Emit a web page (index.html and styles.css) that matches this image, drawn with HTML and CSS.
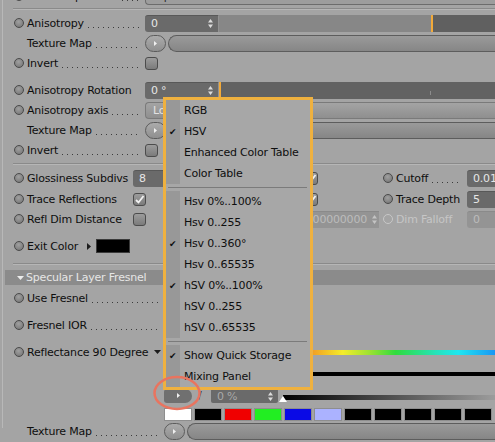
FILE: index.html
```html
<!DOCTYPE html>
<html lang="en">
<head>
  <meta charset="UTF-8" />
  <title>Reflection Attributes</title>
  <link rel="stylesheet" href="styles.css">
</head>
<body>
  <div class="panel">
    <div class="row cut">
      <div class="head"><span class="dot"></span><span class="name">Use Interpolation</span><span class="lead"></span></div>
      <div class="drop light">Equal</div>
    </div>
    <div class="sep"></div>

    <div class="row mt3">
      <div class="head"><span class="dot"></span><span class="name">Anisotropy</span><span class="lead"></span></div>
      <div class="field num">0<svg class="spin" width="5" height="9" viewBox="0 0 5 9"><path d="M2.5 0 5 3.5H0zM2.5 9 5 5.5H0z"/></svg></div>
      <div class="track"><div class="track-lo"></div></div>
    </div>
    <div class="row">
      <div class="head"><span class="dot none"></span><span class="name">Texture Map</span><span class="lead"></span></div>
      <div class="pill"><svg width="3" height="5" viewBox="0 0 3 5"><path d="M0 0 3 2.5 0 5z"/></svg></div>
      <div class="bar"></div>
    </div>
    <div class="row">
      <div class="head"><span class="dot"></span><span class="name">Invert</span><span class="lead"></span></div>
      <div class="chk"></div>
    </div>

    <div class="row mt7">
      <div class="head"><span class="dot"></span><span class="name">Anisotropy Rotation</span></div>
      <div class="field num">0 °<svg class="spin" width="5" height="9" viewBox="0 0 5 9"><path d="M2.5 0 5 3.5H0zM2.5 9 5 5.5H0z"/></svg></div>
      <div class="track dark"><div class="track-lo zero"></div><div class="tick"></div></div>
    </div>
    <div class="row">
      <div class="head"><span class="dot"></span><span class="name">Anisotropy axis</span><span class="lead"></span></div>
      <div class="drop">Local Z</div>
    </div>
    <div class="row">
      <div class="head"><span class="dot none"></span><span class="name">Texture Map</span><span class="lead"></span></div>
      <div class="pill"><svg width="3" height="5" viewBox="0 0 3 5"><path d="M0 0 3 2.5 0 5z"/></svg></div>
      <div class="bar"></div>
    </div>
    <div class="row">
      <div class="head"><span class="dot"></span><span class="name">Invert</span><span class="lead"></span></div>
      <div class="chk"></div>
    </div>
    <div class="sep mt3"></div>

    <div class="row2 mt3">
      <div class="head"><span class="dot"></span><span class="name">Glossiness Subdivs</span></div>
      <div class="mid">
        <div class="field gloss">8</div>
        <div class="chk on push"><svg width="11" height="11" viewBox="0 0 11 11"><path d="M2 6 4.5 8.5 9.5 2"/></svg></div>
      </div>
      <div class="head r"><span class="dot"></span><span class="name">Cutoff</span><span class="lead"></span></div>
      <div class="field side">0.01</div>
    </div>
    <div class="row2 mt1">
      <div class="head"><span class="dot"></span><span class="name">Trace Reflections</span></div>
      <div class="mid">
        <div class="chk on"><svg width="11" height="11" viewBox="0 0 11 11"><path d="M2 6 4.5 8.5 9.5 2"/></svg></div>
        <div class="chk on push"><svg width="11" height="11" viewBox="0 0 11 11"><path d="M2 6 4.5 8.5 9.5 2"/></svg></div>
      </div>
      <div class="head r"><span class="dot"></span><span class="name">Trace Depth</span></div>
      <div class="field side">5</div>
    </div>
    <div class="row2">
      <div class="head"><span class="dot"></span><span class="name">Refl Dim Distance</span></div>
      <div class="mid">
        <div class="chk"></div>
        <div class="field off long">100000000<svg class="spin" width="5" height="9" viewBox="0 0 5 9"><path d="M2.5 0 5 3.5H0zM2.5 9 5 5.5H0z"/></svg></div>
      </div>
      <div class="head r off"><span class="dot"></span><span class="name">Dim Falloff</span></div>
      <div class="field side off">0</div>
    </div>

    <div class="row mt7">
      <div class="head auto"><span class="dot"></span><span class="name">Exit Color</span></div>
      <svg class="tri-r" width="4" height="7" viewBox="0 0 4 7"><path d="M0 0 4 3.5 0 7z"/></svg>
      <div class="color-box"></div>
    </div>
    <div class="sep mt7"></div>

    <div class="group-head">
      <svg width="7" height="4" viewBox="0 0 7 4"><path d="M0 0H7L3.5 4z"/></svg>
      <span>Specular Layer Fresnel</span>
    </div>

    <div class="row mt3">
      <div class="head w164"><span class="dot"></span><span class="name">Use Fresnel</span><span class="lead"></span></div>
    </div>
    <div class="row mt7">
      <div class="head w164"><span class="dot"></span><span class="name">Fresnel IOR</span><span class="lead"></span></div>
    </div>
    <div class="row mt7">
      <div class="head w164"><span class="dot"></span><span class="name">Reflectance 90 Degree</span><span class="grow"></span><svg class="tri-d" width="7" height="4" viewBox="0 0 7 4"><path d="M0 0H7L3.5 4z"/></svg></div>
      <div class="spectrum"></div>
    </div>

    <div class="knots"></div>
    <div class="grad-row">
      <div class="gbtn"><svg width="3" height="5" viewBox="0 0 3 5"><path d="M0 0 3 2.5 0 5z"/></svg></div>
      <span class="slash">/</span>
      <div class="field pct">0 %<svg class="spin" width="5" height="9" viewBox="0 0 5 9"><path d="M2.5 0 5 3.5H0zM2.5 9 5 5.5H0z"/></svg></div>
      <div class="gbar"></div>
    </div>
    <div class="swatches">
      <div class="sw white"></div>
      <div class="sw"></div>
      <div class="sw red"></div>
      <div class="sw green"></div>
      <div class="sw blue"></div>
      <div class="sw lilac"></div>
      <div class="sw"></div>
      <div class="sw"></div>
      <div class="sw"></div>
      <div class="sw"></div>
      <div class="sw"></div>
    </div>
    <div class="row">
      <div class="head w164"><span class="dot none"></span><span class="name">Texture Map</span><span class="lead"></span></div>
      <div class="pill"><svg width="3" height="5" viewBox="0 0 3 5"><path d="M0 0 3 2.5 0 5z"/></svg></div>
      <div class="bar"></div>
    </div>
  </div>

  <div class="menu">
    <div class="mgroup">
      <div class="mi">RGB</div>
      <div class="mi on">HSV</div>
      <div class="mi">Enhanced Color Table</div>
      <div class="mi">Color Table</div>
    </div>
    <div class="msep"></div>
    <div class="mgroup">
      <div class="mi">Hsv 0%..100%</div>
      <div class="mi">Hsv 0..255</div>
      <div class="mi on">Hsv 0..360°</div>
      <div class="mi">Hsv 0..65535</div>
      <div class="mi on">hSV 0%..100%</div>
      <div class="mi">hSV 0..255</div>
      <div class="mi">hSV 0..65535</div>
    </div>
    <div class="msep"></div>
    <div class="mgroup">
      <div class="mi on">Show Quick Storage</div>
      <div class="mi">Mixing Panel</div>
    </div>
  </div>

  <svg class="mark" width="50" height="36" viewBox="0 0 50 36"><ellipse cx="25" cy="18" rx="22.5" ry="16"/></svg>
</body>
</html>
```

FILE: styles.css
```css
* {
  box-sizing: border-box;
}

body {
  margin: 0;
  width: 495px;
  height: 442px;
  overflow: hidden;
  position: relative;
  background: #a4a4a4;
  font-family: 'DejaVu Sans', sans-serif;
  font-size: 11px;
  letter-spacing: -0.2px;
  color: #0e0e0e;
}

.panel {
  width: 495px;
  height: 442px;
  box-shadow: inset 2px 0 0 #a4a4a4, inset 3px 0 0 #b8b8b8;
}

.mt1 { margin-top: 1px; }
.mt3 { margin-top: 3px; }
.mt7 { margin-top: 7px; }

.row {
  display: flex;
  align-items: center;
  height: 20px;
}

.row.cut {
  margin-top: -14px;
}

.row2 {
  display: grid;
  grid-template-columns: 133px 250px 84px 28px;
  align-items: center;
  height: 20px;
}

.head {
  width: 145px;
  flex: none;
  display: flex;
  align-items: center;
  height: 20px;
  padding: 0 4px 0 14px;
}

.row2 .head { width: auto; }
.head.w164 { width: 164px; padding-right: 3px; }
.head.auto { width: auto; padding-right: 0; }
.head.r { padding: 0 5px 0 0; }

.dot {
  flex: none;
  width: 10px;
  height: 10px;
  margin-right: 3px;
  border-radius: 50%;
  border: 1px solid #4a4a4a;
  background: radial-gradient(circle at 45% 35%, #a0a0a0, #717171);
}

.dot.none { visibility: hidden; }

.name { white-space: nowrap; }

.lead {
  flex: 1;
  height: 1px;
  margin: 8px 0 0 4px;
  background-image: linear-gradient(to right, #3c3c3c 1px, transparent 1px);
  background-size: 5px 1px;
}

.grow { flex: 1; }

.tri-d path { fill: #1c1c1c; }

.off .name { color: #c6c6c6; }
.off .dot {
  border-color: #c8c8c8;
  background: none;
}

/* inputs */
.field {
  height: 17px;
  display: flex;
  align-items: center;
  justify-content: space-between;
  padding: 0 5px 0 6px;
  background: #6a6a6a;
  border-top: 1px solid #585858;
  color: #e6e6e6;
  border-radius: 3px 0 0 3px;
  white-space: nowrap;
}

.field.num {
  width: 74px;
  border-right: 1px solid #929292;
}

.spin path { fill: #dcdcdc; }

.field.gloss { width: 72px; }
.field.side { width: 40px; }
.field.off {
  background: #949494;
  border-top-color: #8a8a8a;
  color: #bcbcbc;
}
.field.off .spin path { fill: #c4c4c4; }
.field.long {
  width: 150px;
  margin: 0 4px 0 auto;
  justify-content: flex-end;
  gap: 5px;
  padding-right: 2px;
}

.track {
  flex: 1;
  height: 17px;
  display: flex;
  background: #606060;
}

.track-lo {
  width: 214px;
  height: 100%;
  background: #878787;
  border-right: 2px solid #f2aa3a;
}

.track.dark { background: #626262; }
.track-lo.zero {
  width: 2px;
  background: none;
}

.tick {
  width: 1px;
  height: 4px;
  margin: 9px 0 0 209px;
  background: #8c8c8c;
}

.pill {
  flex: none;
  width: 21px;
  height: 17px;
  display: flex;
  align-items: center;
  justify-content: center;
  border: 1px solid #5c5c5c;
  border-radius: 9px;
  background: linear-gradient(#ababab, #8f8f8f);
}

.pill path, .gbtn path { fill: #f0f0f0; }

.bar {
  flex: 1;
  height: 17px;
  margin-left: 2px;
  border: 1px solid #5d5d5d;
  border-right: none;
  border-radius: 9px 0 0 9px;
  background: linear-gradient(#9a9a9a, #868686);
}

.drop {
  flex: 1;
  height: 17px;
  display: flex;
  align-items: center;
  padding-left: 7px;
  border: 1px solid #7a7a7a;
  border-right: none;
  border-radius: 4px 0 0 4px;
  background: linear-gradient(#a4a4a4, #8f8f8f);
  color: #e2e2e2;
}

.drop.light {
  background: #9d9d9d;
  border-color: #6c6c6c;
  color: #2a2a2a;
}

.chk {
  flex: none;
  width: 13px;
  height: 13px;
  display: flex;
  align-items: center;
  justify-content: center;
  border: 1px solid #4c4c4c;
  border-radius: 3px;
  background: linear-gradient(#9c9c9c, #7b7b7b);
}

.chk path {
  fill: none;
  stroke: #f2f2f2;
  stroke-width: 1.8;
}

.chk.push { margin: 0 65px 0 auto; }

.mid {
  display: flex;
  align-items: center;
}

.sep {
  height: 2px;
  margin-left: 13px;
  border-top: 1px solid #8a8a8a;
  border-bottom: 1px solid #b6b6b6;
}

.row.cut + .sep { margin-top: 2px; }

.tri-r {
  margin-left: 9px;
}

.tri-r path { fill: #1c1c1c; }

.color-box {
  width: 34px;
  height: 14px;
  margin-left: 5px;
  background: #000;
  border: 1px solid #3a3a3a;
}

.group-head {
  height: 15px;
  margin: 5px 0 0 5px;
  padding-left: 12px;
  display: flex;
  align-items: center;
  gap: 2px;
  background: #8b8b8b;
  color: #e6e6e6;
}

.group-head path { fill: #ececec; }

/* gradient widget */
.spectrum {
  flex: 1;
  height: 5px;
  background: linear-gradient(to right, #e02020 0%, #ee7a1a 38%, #f2a024 45%, #f4ec2a 54%, #9ee232 62%, #30dc3e 70%, #26e2b8 82%, #1ee6f0 89%, #1a96f4 100%);
}

.knots {
  height: 4px;
  margin: 10px 0 0 164px;
  background: #000;
}

.grad-row {
  display: flex;
  align-items: center;
  height: 15px;
  margin: 12px 0 0 164px;
}

.gbtn {
  width: 28px;
  height: 14px;
  display: flex;
  align-items: center;
  justify-content: center;
  border-radius: 3px 7px 7px 3px;
  background: #707070;
}

.slash {
  width: 13px;
  padding-left: 6px;
  color: #2a2a2a;
}

.field.pct {
  width: 67px;
  height: 14px;
  margin-left: 6px;
  color: #a9a9a9;
  border-radius: 2px;
}

.gbar {
  flex: 1;
  height: 5px;
  margin: 3px 0 0 5px;
  position: relative;
  background: linear-gradient(to right, #000, #9c9c9c);
}

.gbar::after {
  content: "";
  position: absolute;
  left: -4px;
  top: 1px;
  border-left: 4px solid transparent;
  border-right: 4px solid transparent;
  border-bottom: 6px solid #fff;
}

.swatches {
  display: flex;
  gap: 2px;
  height: 13px;
  margin: 5px 0 0 164px;
}

.sw {
  flex: none;
  width: 28px;
  height: 13px;
  background: #000;
  border: 1px solid #8e8e8e;
}

.sw.white { background: #fff; }
.sw.red { background: #f00000; }
.sw.green { background: #22ee22; }
.sw.blue { background: #0a0ae6; }
.sw.lilac { background: #abb2ff; }

/* popup menu */
.menu {
  position: absolute;
  left: 163px;
  top: 97px;
  width: 150px;
  border: 3px solid #efb13f;
  background: #a7a7a7;
  color: #0e0e0e;
}

.mgroup {
  background: linear-gradient(to right, #989898 14px, transparent 14px);
}

.mi {
  position: relative;
  height: 21px;
  display: flex;
  align-items: center;
  padding-left: 18px;
  white-space: nowrap;
}

.mi.on::before {
  content: "✔";
  position: absolute;
  left: 3px;
  font-size: 9px;
}

.msep {
  height: 7px;
  position: relative;
}

.msep::after {
  content: "";
  position: absolute;
  left: 2px;
  right: 3px;
  top: 3px;
  border-top: 1px solid #7b7b7b;
}

.mark {
  position: absolute;
  left: 152px;
  top: 375px;
}

.mark ellipse {
  fill: none;
  stroke: #e9745f;
  stroke-width: 2.5;
}
```
